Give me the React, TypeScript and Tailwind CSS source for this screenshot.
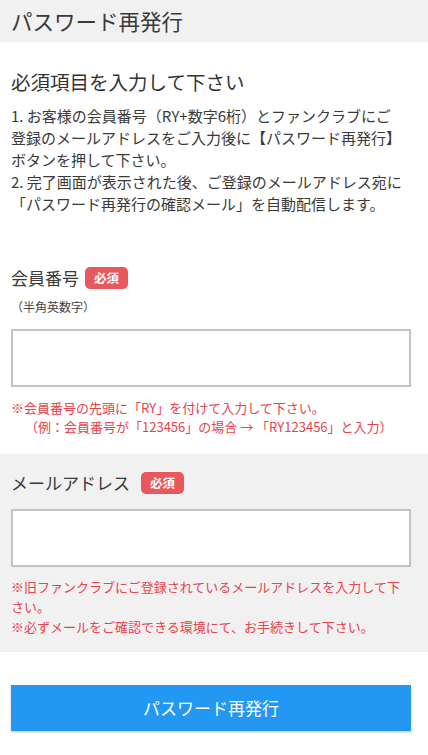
import React from "react";

const font = "font-['Noto_Sans_CJK_JP','Noto_Sans',sans-serif]";

function Badge({ className = "" }: { className?: string }) {
  return (
    <span
      className={`inline-flex h-[22px] w-[43px] items-center justify-center rounded-[5px] bg-[#e9585d] text-[12.5px] font-bold text-white ${className}`}
    >
      必須
    </span>
  );
}

function Field({ label, gap }: { label: string; gap: string }) {
  return (
    <div className="flex h-[22px] items-center">
      <span className="text-[17px] leading-[22px] text-[#3a3a3a]">{label}</span>
      <Badge className={gap} />
    </div>
  );
}

function TextBox() {
  return (
    <input
      type="text"
      className="block h-[58px] w-[400px] border-2 border-[#c3c3c7] bg-white outline-none"
    />
  );
}

export default function App() {
  return (
    <div className={`${font} min-h-[755px] w-full bg-white text-[#333]`}>
      <header className="flex h-[42px] items-center bg-[#f1f1f1] px-[11px]">
        <h1 className="text-[21.5px] leading-none text-[#3a3a3a]">パスワード再発行</h1>
      </header>

      <section className="px-[11px] pt-[26px] pb-[18px]">
        <h2 className="text-[19.5px] leading-[28px] text-[#333]">必須項目を入力して下さい</h2>
        <p className="mt-[9px] text-[15px] leading-[22px] text-[#3a3a3a]">
          <span className="block">1. お客様の会員番号（RY+数字6桁）とファンクラブにご</span>
          <span className="block">登録のメールアドレスをご入力後に【パスワード再発行】</span>
          <span className="block">ボタンを押して下さい。</span>
          <span className="block">2. 完了画面が表示された後、ご登録のメールアドレス宛に</span>
          <span className="block">「パスワード再発行の確認メール」を自動配信します。</span>
        </p>

        <div className="mt-[52px]">
          <Field label="会員番号" gap="ml-[6px]" />
          <p className="mt-[9px] text-[12px] leading-[18px] text-[#444]">（半角英数字）</p>
          <div className="mt-[13px]">
            <TextBox />
          </div>
          <div className="mt-[11px] text-[13px] leading-[19px] text-[#e8424b]">
            <p>※会員番号の先頭に「RY」を付けて入力して下さい。</p>
            <p className="pl-[14px]">（例：会員番号が「123456」の場合 → 「RY123456」と入力）</p>
          </div>
        </div>
      </section>

      <section className="bg-[#f1f1f1] px-[11px] pt-[18px] pb-[15px]">
        <Field label="メールアドレス" gap="ml-[11px]" />
        <div className="mt-[15px]">
          <TextBox />
        </div>
        <div className="mt-[10px] w-[400px] text-[13px] leading-[20px] text-[#e8424b]">
          <p>※旧ファンクラブにご登録されているメールアドレスを入力して下さい。</p>
          <p>※必ずメールをご確認できる環境にて、お手続きして下さい。</p>
        </div>
      </section>

      <div className="px-[11px] pt-[33px] pb-[24px]">
        <button
          type="button"
          className="flex h-[46px] w-[400px] items-center justify-center bg-[#2398f3] text-[17px] text-white shadow-[0_1px_2px_rgba(0,0,0,0.25)]"
        >
          パスワード再発行
        </button>
      </div>
    </div>
  );
}
